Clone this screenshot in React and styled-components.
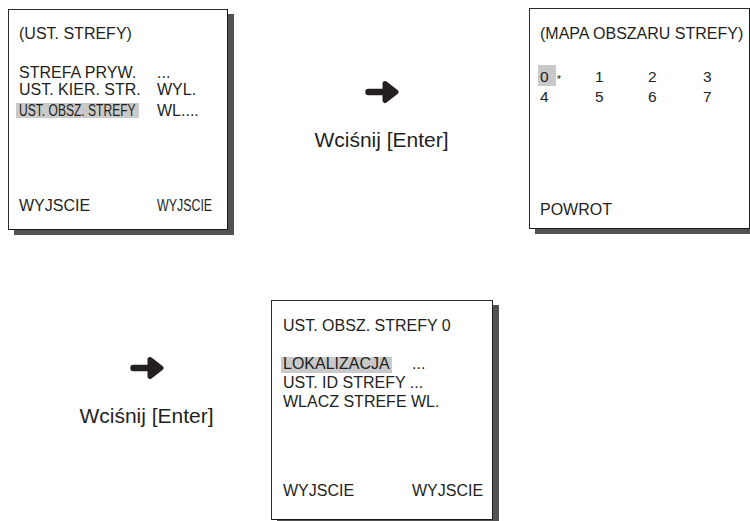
import styled, { createGlobalStyle, css } from 'styled-components'

const GlobalStyle = createGlobalStyle`
  body {
    margin: 0;
    background: #fff;
    overflow: hidden;
  }
`

const Page = styled.div`
  width: 750px;
  height: 521px;
  overflow: hidden;
  display: flex;
  flex-direction: column;
  font-family: "Liberation Sans", Arial, sans-serif;
  color: #231f20;
`

const Row = styled.div`
  display: flex;
  align-items: flex-start;
  height: ${p => p.$h}px;
  margin-top: ${p => p.$mt || 0}px;
`

const Panel = styled.div`
  box-sizing: border-box;
  flex-shrink: 0;
  width: ${p => p.$w}px;
  height: ${p => p.$h}px;
  margin: ${p => p.$mt || 0}px 0 0 ${p => p.$ml || 0}px;
  padding: ${p => p.$pt}px 0 ${p => p.$pb}px ${p => p.$pl}px;
  border: 1px solid #2b2b2b;
  border-right-color: #1a1a1a;
  border-bottom-color: #1a1a1a;
  box-shadow: 6px 5px 0 #525252;
  background: #fff;
  display: flex;
  flex-direction: column;
  font-size: 16px;
  line-height: 17px;
  white-space: nowrap;
`

const Title = styled.div``

const Menu = styled.div`
  display: flex;
  flex-direction: column;
  margin-top: ${p => p.$mt}px;
  line-height: ${p => p.$lh || 17}px;
`

const Item = styled.div`
  display: grid;
  grid-template-columns: ${p => p.$col}px auto;
  margin-top: ${p => p.$mt || 0}px;
`

const Footer = styled(Item)`
  margin-top: auto;
`

const Mark = styled.span`
  display: inline-block;
  background: #c9c9c9;
  margin-left: -${p => p.$ml}px;
  padding: 0 ${p => p.$px}px ${p => p.$pb || 0}px;
  line-height: ${p => p.$lh}px;
  ${p => p.$narrow && css`
    transform: scaleX(${p.$narrow});
    transform-origin: left center;
  `}
`

const Narrow = styled.span`
  display: inline-block;
  transform: scaleX(${p => p.$k});
  transform-origin: left center;
`

const ZoneGrid = styled.div`
  display: grid;
  grid-template-columns: 55px 53px 55px auto;
  margin-top: 26px;
  font-size: 15.5px;
  line-height: 18px;
`

const Sel = styled.span`
  display: inline-block;
  background: #c9c9c9;
  margin: -3px 0 0 -2px;
  padding: 3px 7px 0 2px;
`

const Star = styled.span`
  font-size: 11px;
  margin-left: 1px;
  vertical-align: -1px;
`

const Step = styled.div`
  box-sizing: border-box;
  flex-shrink: 0;
  width: ${p => p.$w}px;
  padding: ${p => p.$pt}px 0 0 ${p => p.$pl}px;
  display: flex;
  flex-direction: column;
  align-items: center;
  gap: 24px;
`

const Hint = styled.div`
  font-size: 21px;
  line-height: 24px;
  white-space: nowrap;
`

function Arrow() {
  return (
    <svg width="34" height="24" viewBox="0 0 34 24">
      <line x1="3.5" y1="12" x2="24" y2="12" stroke="#231f20" strokeWidth="6.5" strokeLinecap="round" />
      <path d="M20 3.5 L31 12 L20 20.5 Z" fill="#231f20" stroke="#231f20" strokeWidth="5" strokeLinejoin="round" />
    </svg>
  )
}

function NextStep({ w, pt, pl }) {
  return (
    <Step $w={w} $pt={pt} $pl={pl}>
      <Arrow />
      <Hint>Wciśnij [Enter]</Hint>
    </Step>
  )
}

export default function App() {
  return (
    <Page>
      <GlobalStyle />
      <Row $h={230}>
        <Panel $w={220} $h={221} $mt={9} $ml={8} $pt={15} $pb={15} $pl={10}>
          <Title>(UST. STREFY)</Title>
          <Menu $mt={22}>
            <Item $col={138}><span>STREFA PRYW.</span><span>...</span></Item>
            <Item $col={138}><span>UST. KIER. STR.</span><span>WYL.</span></Item>
            <Item $col={138} $mt={4}>
              <span><Mark $ml={3} $px={4} $lh={15} $narrow={0.754}>UST. OBSZ. STREFY</Mark></span>
              <span>WL....</span>
            </Item>
          </Menu>
          <Footer $col={138}>
            <span>WYJSCIE</span>
            <span><Narrow $k={0.775}>WYJSCIE</Narrow></span>
          </Footer>
        </Panel>
        <NextStep w={301} pt={80} pl={6} />
        <Panel $w={221} $h={221} $mt={8} $pt={16} $pb={10} $pl={10}>
          <Title>(MAPA OBSZARU STREFY)</Title>
          <ZoneGrid>
            <span><Sel>0</Sel><Star>*</Star></span>
            <span>1</span>
            <span>2</span>
            <span>3</span>
            <span>4</span>
            <span>5</span>
            <span>6</span>
            <span>7</span>
          </ZoneGrid>
          <Footer $col={100}>
            <span>POWROT</span>
          </Footer>
        </Panel>
      </Row>
      <Row $h={221} $mt={70}>
        <NextStep w={271} pt={56} pl={22} />
        <Panel $w={222} $h={220} $pt={16} $pb={20} $pl={11}>
          <Title>UST. OBSZ. STREFY 0</Title>
          <Menu $mt={20} $lh={19}>
            <Item $col={129}>
              <span><Mark $ml={2} $px={2} $pb={2} $lh={14}>LOKALIZACJA</Mark></span>
              <span>...</span>
            </Item>
            <div>UST. ID STREFY ...</div>
            <div>WLACZ STREFE WL.</div>
          </Menu>
          <Footer $col={129}>
            <span>WYJSCIE</span>
            <span>WYJSCIE</span>
          </Footer>
        </Panel>
      </Row>
    </Page>
  )
}
